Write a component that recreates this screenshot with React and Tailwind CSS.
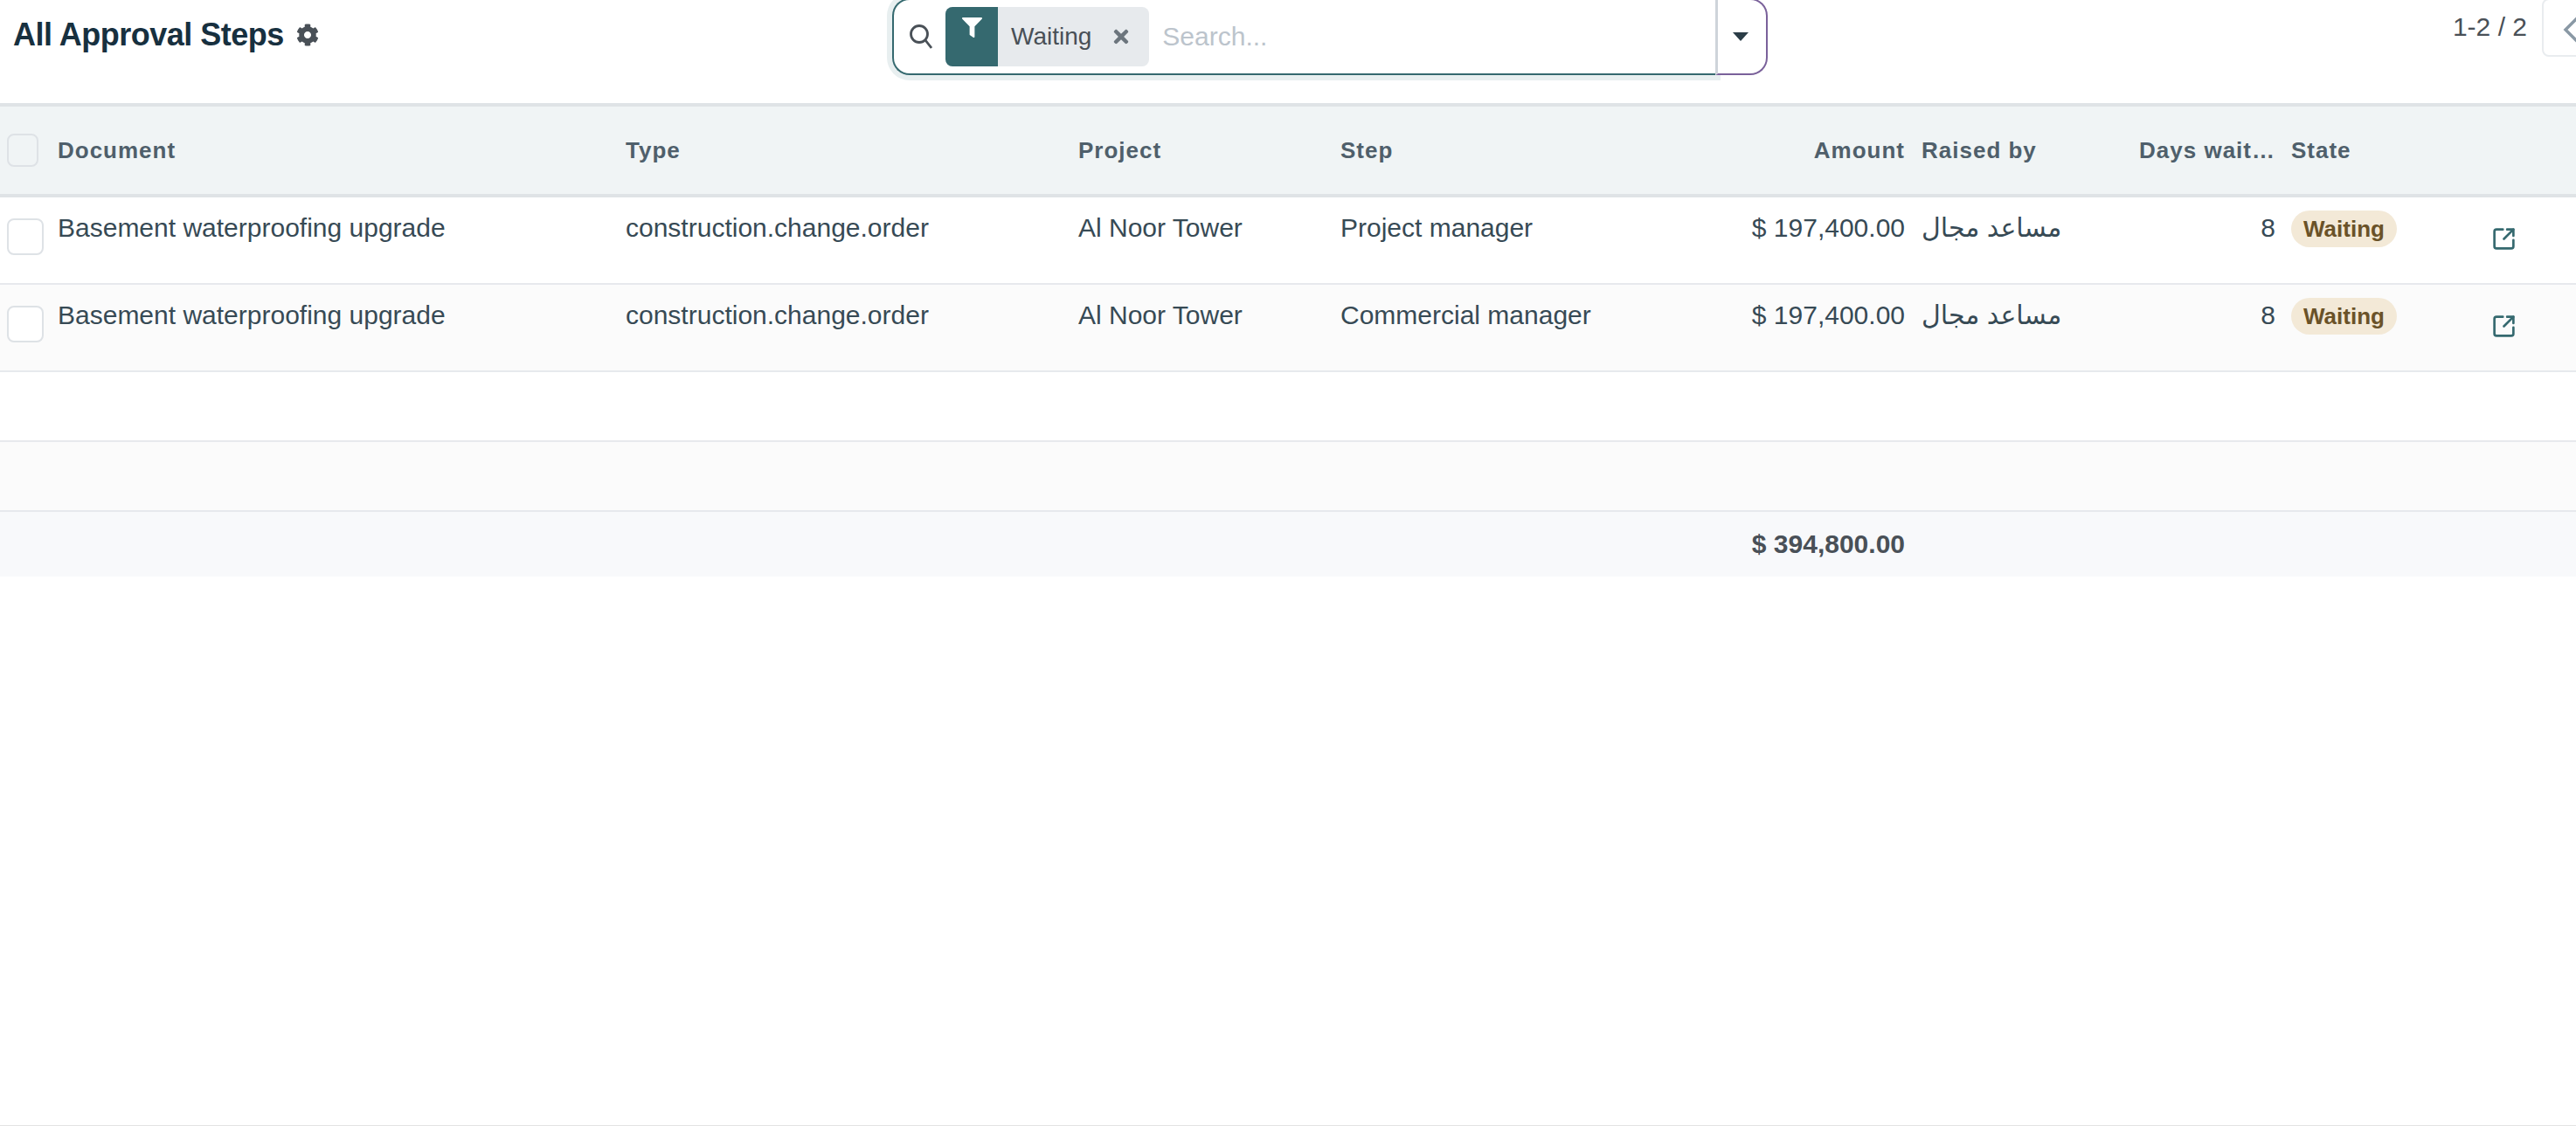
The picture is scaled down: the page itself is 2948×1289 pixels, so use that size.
import { FaCog, FaFilter, FaTimes, FaSearch } from "react-icons/fa";
import { SquareArrowOutUpRight } from "lucide-react";

// colonnes : case, document, type, projet, étape + montant, demandeur, jours, état, lien
const cols = "grid grid-cols-[66px_650px_518px_300px_665px_201px_222px_228px_98px]";

const rows = [
  { id: 1, step: "Project manager", bg: "bg-white" },
  { id: 2, step: "Commercial manager", bg: "bg-[#fbfbfb]" },
];

function ListRow({ step, bg }) {
  return (
    <div className={`${cols} ${bg} h-[100px] border-b-2 border-[#e7e9ed] text-[#374a55]`}>
      <div className="pl-2 pt-6">
        <div className="w-[42px] h-[42px] rounded-lg border-2 border-[#dee2e6] bg-white" />
      </div>
      <div className="pt-[14px]">Basement waterproofing upgrade</div>
      <div className="pt-[14px]">construction.change.order</div>
      <div className="pt-[14px]">Al Noor Tower</div>
      <div className="pt-[14px] flex justify-between pr-[19px]">
        <span>{step}</span>
        <span>$ 197,400.00</span>
      </div>
      <div className="pt-[14px]" dir="rtl">
        <div className="text-left">مساعد مجال</div>
      </div>
      <div className="pt-[14px] pr-[18px] text-right">8</div>
      <div className="pt-[14px]">
        <span className="inline-flex items-center h-[42px] px-[14px] rounded-[21px] bg-[#f3e9d7] text-[#6a5228] font-bold text-[26px]">
          Waiting
        </span>
      </div>
      <div className="pt-[33px] pl-[1px]">
        <SquareArrowOutUpRight size={29} strokeWidth={2.2} className="text-[#35696f]" />
      </div>
    </div>
  );
}

export default function App() {
  return (
    <div
      className="h-[1289px] overflow-hidden flex flex-col bg-white text-[30px] leading-[42px] border-b border-[#e3e3e3]"
      style={{ fontFamily: '"Liberation Sans", "DejaVu Sans", sans-serif' }}
    >
      {/* Control panel */}
      <div className="grid grid-cols-[1021px_1002px_1fr] h-[118px] shrink-0">
        <div className="pl-[15px] pt-[19px] flex items-start gap-[14px]">
          <h1 className="text-[36px] leading-[42px] font-bold tracking-[-0.5px] text-[#17303f]">All Approval Steps</h1>
          <FaCog size={26} className="mt-[8px] text-[#495057]" />
        </div>

        <div className="flex items-start -mt-[2px]">
          <div className="flex-1 h-[88px] rounded-l-[20px] border-2 border-r-0 border-[#35696f] shadow-[0_0_0_6px_#e8eff0] bg-white flex items-center">
            <FaSearch size={1} className="hidden" />
            <svg viewBox="0 0 26 28" className="w-[26px] h-[28px] ml-[18px] text-[#495057]" fill="none" stroke="currentColor" strokeWidth="2.8">
              <circle cx="11" cy="11" r="9.5" />
              <path d="M18 18 L25 27" />
            </svg>
            <div className="ml-[15px] flex items-stretch h-[68px] rounded-lg bg-[#e7eaed] overflow-hidden">
              <div className="w-[60px] bg-[#35696f] flex justify-center pt-3 text-white">
                <FaFilter size={23} />
              </div>
              <div className="flex items-center pl-[15px] pr-5 gap-[22px] text-[28px] text-[#495057]">
                <span>Waiting</span>
                <FaTimes size={24} className="text-[#6c757d]" />
              </div>
            </div>
            <div className="ml-[15px] flex-1 text-[#bcc4cc]">Search...</div>
          </div>
          <div className="relative w-[60px] h-[88px] rounded-r-[20px] border-2 border-l-[3px] border-[#7a619a] border-l-[#ced4da] border-t-[#7a619a] bg-white flex items-center justify-center">
            <div className="w-0 h-0 border-x-[9px] border-x-transparent border-t-[10px] border-t-[#2b3d47] -ml-[3px]" />
          </div>
        </div>

        <div className="flex items-start justify-end -mr-[60px] -mt-[2px]">
          <span className="text-[#495057] mt-[12px] mr-[17px]">1-2 / 2</span>
          <div className="w-[99px] h-[67px] rounded-lg border-2 border-[#e9ecef] bg-white pl-[22px] pt-[17px]">
            <svg viewBox="0 0 20 34" className="w-5 h-[34px] text-[#8a99a5]" fill="none" stroke="currentColor" strokeWidth="3.5">
              <path d="M18 2 L3 17 L18 32" />
            </svg>
          </div>
        </div>
      </div>

      {/* Table header */}
      <div className={`${cols} shrink-0 h-[108px] items-center bg-[#f0f4f5] border-y-4 border-[#dfe3e6] text-[26px] font-bold tracking-[1px] text-[#4f5f6b]`}>
        <div className="pl-2">
          <div className="w-9 h-[38px] rounded-lg border-2 border-[#dee2e6]" />
        </div>
        <div>Document</div>
        <div>Type</div>
        <div>Project</div>
        <div className="flex justify-between pr-[19px]">
          <span>Step</span>
          <span>Amount</span>
        </div>
        <div>Raised by</div>
        <div className="pr-[18px] text-right">Days wait…</div>
        <div>State</div>
        <div />
      </div>

      {rows.map((r) => (
        <ListRow key={r.id} step={r.step} bg={r.bg} />
      ))}

      {/* Lignes vides */}
      <div className="h-[80px] shrink-0 bg-white border-b-2 border-[#e7e9ed]" />
      <div className="h-[80px] shrink-0 bg-[#fbfbfb] border-b-2 border-[#e7e9ed]" />

      {/* Total */}
      <div className="h-[74px] shrink-0 bg-[#f8f9fb] flex items-center justify-end pr-[768px] font-bold text-[#495057]">
        $ 394,800.00
      </div>
    </div>
  );
}
